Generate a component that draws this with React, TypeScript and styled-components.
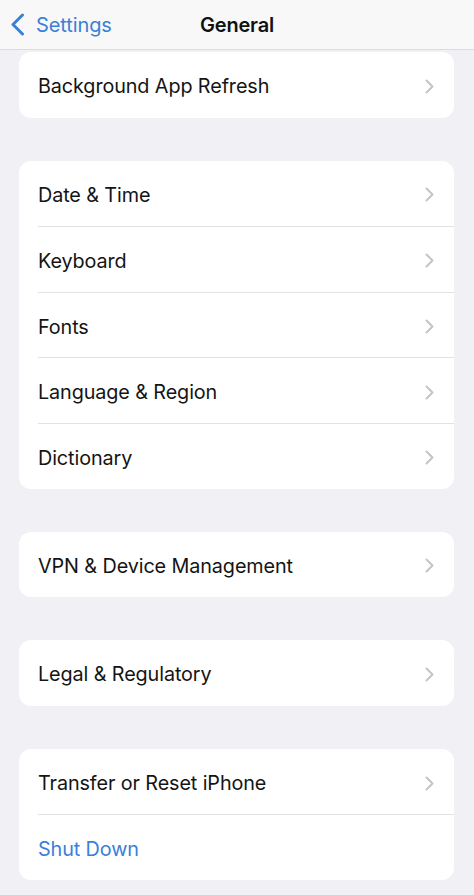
import styled, { createGlobalStyle } from 'styled-components';

const GlobalStyle = createGlobalStyle`
  html, body {
    margin: 0;
    padding: 0;
    background: #f0f0f5;
  }
  body {
    font-family: Inter, "Liberation Sans", Arial, sans-serif;
    -webkit-font-smoothing: antialiased;
  }
`;

const Page = styled.div`
  width: 474px;
  min-height: 895px;
  background: #f0f0f5;
  display: flex;
  flex-direction: column;
  overflow: hidden;
`;

const NavBar = styled.header`
  height: 50px;
  background: #f8f8f8;
  border-bottom: 1px solid #dcdcdf;
  display: grid;
  grid-template-columns: 1fr auto 1fr;
  align-items: center;
  box-sizing: border-box;
`;

const BackButton = styled.div`
  display: flex;
  align-items: center;
  gap: 11px;
  padding-left: 10px;
  color: #3a80d9;
  font-size: 20px;
  letter-spacing: -0.1px;

  svg {
    width: 15px;
    height: 23px;
  }
`;

const Title = styled.h1`
  margin: 0;
  font-size: 20px;
  font-weight: 600;
  color: #111;
  letter-spacing: -0.2px;
`;

const Content = styled.main`
  display: flex;
  flex-direction: column;
  gap: 43px;
  padding: 2px 20px 0 19px;
`;

const Card = styled.section`
  background: #fff;
  border-radius: 12px;
  overflow: hidden;
`;

const Row = styled.div`
  box-sizing: border-box;
  height: 65.6px;
  margin-left: 19px;
  padding: 3px 20px 0 0;
  display: flex;
  align-items: center;
  justify-content: space-between;
  & + & {
    border-top: 1px solid #e2e2e5;
  }
`;

const Label = styled.span<{ $action?: boolean }>`
  font-size: 19.8px;
  color: ${({ $action }) => ($action ? '#3a80d9' : '#141414')};
  letter-spacing: -0.1px;
`;

const Chevron = () => (
  <svg width="9" height="15" viewBox="0 0 9 15" fill="none">
    <path d="M1.5 1.5 L7.5 7.5 L1.5 13.5" stroke="#c4c4c8" strokeWidth="2" strokeLinecap="round" strokeLinejoin="round" />
  </svg>
);

type Item = { label: string; action?: boolean };

const groups: Item[][] = [
  [{ label: 'Background App Refresh' }],
  [
    { label: 'Date & Time' },
    { label: 'Keyboard' },
    { label: 'Fonts' },
    { label: 'Language & Region' },
    { label: 'Dictionary' },
  ],
  [{ label: 'VPN & Device Management' }],
  [{ label: 'Legal & Regulatory' }],
  [{ label: 'Transfer or Reset iPhone' }, { label: 'Shut Down', action: true }],
];

export default function App() {
  return (
    <Page>
      <GlobalStyle />
      <NavBar>
        <BackButton>
          <svg viewBox="0 0 15 23" fill="none">
            <path d="M12.5 2 L3 11.5 L12.5 21" stroke="#3a80d9" strokeWidth="3" strokeLinecap="round" strokeLinejoin="round" />
          </svg>
          Settings
        </BackButton>
        <Title>General</Title>
        <div />
      </NavBar>
      <Content>
        {groups.map((group, i) => (
          <Card key={i}>
            {group.map((item) => (
              <Row key={item.label}>
                <Label $action={item.action}>{item.label}</Label>
                {!item.action && <Chevron />}
              </Row>
            ))}
          </Card>
        ))}
      </Content>
    </Page>
  );
}
